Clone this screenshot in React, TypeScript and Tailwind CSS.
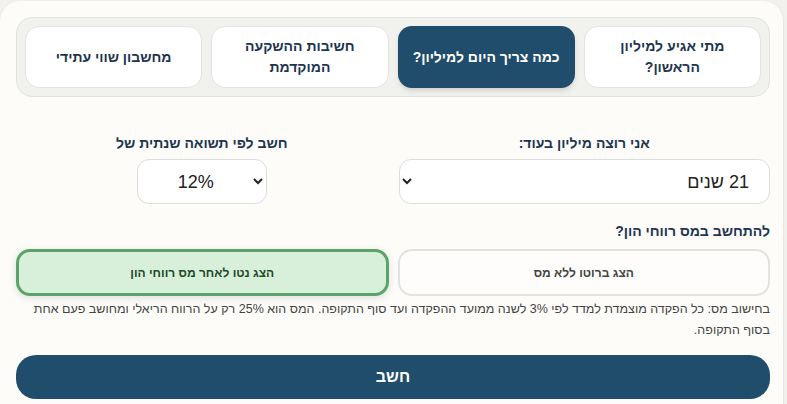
import React, { useState } from 'react';

const tabs = [
  { id: 'first', label: 'מתי אגיע למיליון הראשון?' },
  { id: 'today', label: 'כמה צריך היום למיליון?' },
  { id: 'early', label: 'חשיבות ההשקעה המוקדמת' },
  { id: 'future', label: 'מחשבון שווי עתידי' },
];

const App = () => {
  const [activeTab, setActiveTab] = useState('today');
  const [years, setYears] = useState('21');
  const [rate, setRate] = useState('12');
  const [withTax, setWithTax] = useState(true);

  return (
    <div className="min-h-screen bg-[#f2f1ed] pt-px pr-[4px]" style={{ fontFamily: '"Liberation Sans", Arial, sans-serif' }}>
      <div dir="rtl" className="min-h-[420px] rounded-t-[20px] bg-[#fdfcf9] pt-4 pr-[13px] pl-4 shadow-sm">
        {/* Tabs */}
        <div className="grid grid-cols-4 gap-[9px] rounded-[16px] border border-[#e2e2df] bg-[#f1f1ee] p-[8px]">
          {tabs.map(tab => (
            <button
              key={tab.id}
              onClick={() => setActiveTab(tab.id)}
              className={
                activeTab === tab.id
                  ? 'h-[62px] rounded-[14px] bg-[#1f4d6b] px-3 text-[14px] font-bold leading-[21px] text-white shadow-md'
                  : 'h-[62px] rounded-[14px] border border-[#e3e3e3] bg-white px-3 text-[14px] font-bold leading-[21px] text-[#1d3550]'
              }
            >
              {tab.label}
            </button>
          ))}
        </div>

        {/* Inputs */}
        <div className="mt-[38px] grid grid-cols-2 gap-[11px]">
          <div className="flex flex-col items-center">
            <label className="mb-[8px] text-[14px] font-bold leading-[16px] text-[#1d3550]">אני רוצה מיליון בעוד:</label>
            <select
              value={years}
              onChange={e => setYears(e.target.value)}
              className="h-[45px] w-full rounded-[12px] border border-[#dddddd] bg-white px-4 text-[18px] text-[#222]"
            >
              {[5, 10, 15, 20, 21, 25, 30].map(y => (
                <option key={y} value={y}>{y} שנים</option>
              ))}
            </select>
          </div>
          <div className="flex flex-col items-center">
            <label className="mb-[8px] text-[14px] font-bold leading-[16px] text-[#1d3550]">חשב לפי תשואה שנתית של</label>
            <select
              dir="ltr"
              value={rate}
              onChange={e => setRate(e.target.value)}
              className="h-[45px] w-[130px] rounded-[12px] border border-[#dddddd] bg-white px-2 text-center text-[18px] text-[#222] [text-align-last:center]"
            >
              {[4, 6, 8, 10, 12, 15].map(r => (
                <option key={r} value={r}>{r}%</option>
              ))}
            </select>
          </div>
        </div>

        {/* Tax */}
        <div className="mt-[19px] text-[14px] font-bold leading-[16px] text-[#1d3550]">להתחשב במס רווחי הון?</div>
        <div className="mt-[10px] grid grid-cols-2 gap-[9px]">
          <button
            onClick={() => setWithTax(false)}
            className={
              !withTax
                ? 'h-[47px] rounded-[14px] border-[3px] border-[#5aa36a] bg-[#d8f0d9] text-[12px] font-bold text-[#1c4a2a] shadow-md'
                : 'h-[47px] rounded-[14px] border-2 border-[#e2e2e0] bg-[#fefdfb] text-[12px] font-bold text-[#444]'
            }
          >
            הצג ברוטו ללא מס
          </button>
          <button
            onClick={() => setWithTax(true)}
            className={
              withTax
                ? 'h-[47px] rounded-[14px] border-[3px] border-[#5aa36a] bg-[#d8f0d9] text-[12px] font-bold text-[#1c4a2a] shadow-[0_2px_8px_rgba(0,0,0,0.12)]'
                : 'h-[47px] rounded-[14px] border-2 border-[#e2e2e0] bg-[#fefdfb] text-[12px] font-bold text-[#444]'
            }
          >
            הצג נטו לאחר מס רווחי הון
          </button>
        </div>
        <p className="mt-[3px] text-[12.5px] leading-[21px] text-[#444]">
          בחישוב מס: כל הפקדה מוצמדת למדד לפי 3% לשנה ממועד ההפקדה ועד סוף התקופה. המס הוא 25% רק על הרווח הריאלי ומחושב פעם אחת בסוף התקופה.
        </p>

        <button className="mt-[14px] h-[44px] w-full rounded-[20px] bg-[#1f4d6b] text-[16px] font-bold text-white">
          חשב
        </button>
      </div>
    </div>
  );
};

export default App;
